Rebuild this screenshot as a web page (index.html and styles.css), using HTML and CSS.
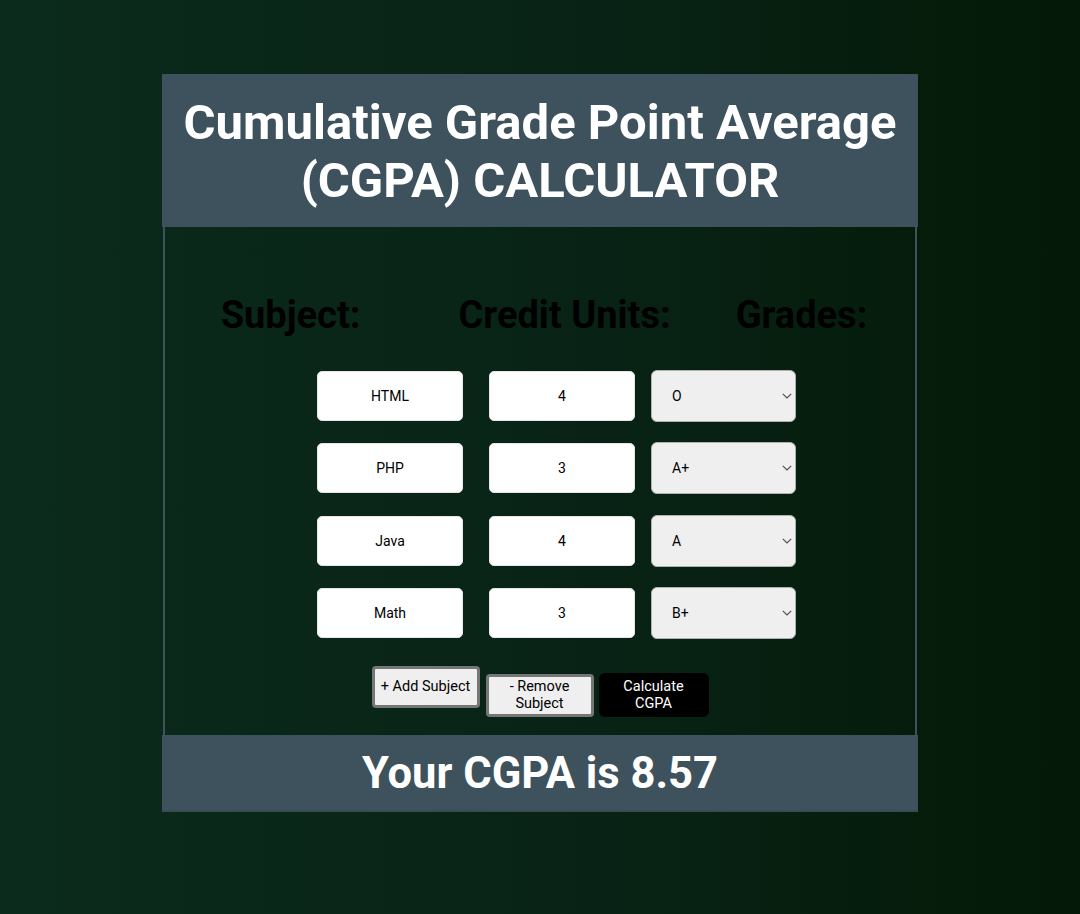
FILE: index.html
```html
<!DOCTYPE html>
<html lang="en">
<head>
<meta charset="utf-8">
<title>CGPA Calculator</title>
<link rel="stylesheet" href="styles.css">
</head>
<body>
<div class="card">
  <header class="card-header">
    <h1>Cumulative Grade Point Average (CGPA) CALCULATOR</h1>
  </header>
  <main class="card-body">
    <div class="labels">
      <h2 class="label label-subject">Subject:</h2>
      <h2 class="label label-credit">Credit Units:</h2>
      <h2 class="label label-grade">Grades:</h2>
    </div>
    <div class="rows">
      <div class="row">
        <input class="field" type="text" value="HTML">
        <input class="field field-credit" type="text" value="4">
        <div class="grade-wrap">
          <select class="grade"><option>O</option><option>A+</option><option>A</option><option>B+</option></select>
          <svg class="chev" width="10" height="6" viewBox="0 0 10 6"><polyline points="0.8,0.8 5,5 9.2,0.8" fill="none" stroke="#4a4a4a" stroke-width="1.1"/></svg>
        </div>
      </div>
      <div class="row">
        <input class="field" type="text" value="PHP">
        <input class="field field-credit" type="text" value="3">
        <div class="grade-wrap">
          <select class="grade"><option>O</option><option selected>A+</option><option>A</option><option>B+</option></select>
          <svg class="chev" width="10" height="6" viewBox="0 0 10 6"><polyline points="0.8,0.8 5,5 9.2,0.8" fill="none" stroke="#4a4a4a" stroke-width="1.1"/></svg>
        </div>
      </div>
      <div class="row">
        <input class="field" type="text" value="Java">
        <input class="field field-credit" type="text" value="4">
        <div class="grade-wrap">
          <select class="grade"><option>O</option><option>A+</option><option selected>A</option><option>B+</option></select>
          <svg class="chev" width="10" height="6" viewBox="0 0 10 6"><polyline points="0.8,0.8 5,5 9.2,0.8" fill="none" stroke="#4a4a4a" stroke-width="1.1"/></svg>
        </div>
      </div>
      <div class="row">
        <input class="field" type="text" value="Math">
        <input class="field field-credit" type="text" value="3">
        <div class="grade-wrap">
          <select class="grade"><option>O</option><option>A+</option><option>A</option><option selected>B+</option></select>
          <svg class="chev" width="10" height="6" viewBox="0 0 10 6"><polyline points="0.8,0.8 5,5 9.2,0.8" fill="none" stroke="#4a4a4a" stroke-width="1.1"/></svg>
        </div>
      </div>
    </div>
    <div class="actions">
      <button class="btn btn-add">+ Add Subject</button>
      <button class="btn btn-remove">- Remove Subject</button>
      <button class="btn btn-calc">Calculate CGPA</button>
    </div>
  </main>
  <footer class="card-footer">
    <h2 class="result">Your CGPA is 8.57</h2>
  </footer>
</div>
</body>
</html>
```
FILE: styles.css
```css
html, body {
  margin: 0;
  padding: 0;
}
body {
  min-height: 914px;
  background: linear-gradient(to right, #0b2b1c 0%, #082315 55%, #041907 100%);
  font-family: Roboto, "Noto Sans", "Liberation Sans", sans-serif;
  padding-top: 74px;
  box-sizing: border-box;
}
.card {
  width: 756px;
  margin: 0 auto 0 162px;
  display: flex;
  flex-direction: column;
}
.card-header {
  background: #3e525d;
  height: 153px;
  box-sizing: border-box;
  padding-top: 3px;
  display: flex;
  align-items: center;
  justify-content: center;
}
.card-header h1 {
  margin: 0;
  color: #ffffff;
  font-size: 49px;
  font-weight: 700;
  line-height: 58px;
  text-align: center;
  padding: 0 4px;
}
.card-body {
  margin: 0 1px;
  border: 2px solid #3e525d;
  border-top: 0;
  border-bottom: 0;
  height: 508px;
  box-sizing: border-box;
  display: flex;
  flex-direction: column;
}
.labels {
  display: flex;
  justify-content: center;
  padding-left: 8px;
  margin-top: 65px;
}
.label {
  margin: 0;
  font-size: 38px;
  font-weight: 700;
  color: #000000;
  line-height: 47px;
}
.label-credit { margin-left: 98px; }
.label-grade { margin-left: 65px; }
.rows {
  display: flex;
  flex-direction: column;
  gap: 20.33px;
  margin-top: 31px;
}
.row {
  display: flex;
  align-items: center;
  justify-content: center;
  padding-left: 33px;
  height: 52px;
}
.field {
  width: 146px;
  height: 50px;
  box-sizing: border-box;
  border: 1px solid #e6e6e6;
  border-radius: 5px;
  background: #ffffff;
  text-align: center;
  font-family: Roboto, "Noto Sans", sans-serif;
  font-size: 14px;
  color: #000000;
  padding: 0;
}
.field-credit { margin-left: 26px; }
.grade-wrap {
  position: relative;
  margin-left: 16px;
  width: 145px;
  height: 52px;
}
.grade {
  -webkit-appearance: none;
  appearance: none;
  width: 145px;
  height: 52px;
  box-sizing: border-box;
  border: 1px solid #b0b0b0;
  border-radius: 6px;
  background-color: #efefef;
  font-family: Roboto, "Noto Sans", sans-serif;
  font-size: 14px;
  color: #000000;
  padding-left: 20px;
}
.chev {
  position: absolute;
  right: 4px;
  top: 23px;
  pointer-events: none;
}
.actions {
  display: flex;
  justify-content: center;
  align-items: baseline;
  gap: 5px;
  margin-top: 27px;
}
.btn {
  font-family: Roboto, "Noto Sans", sans-serif;
  font-size: 14.5px;
  line-height: 17px;
  box-sizing: border-box;
  padding: 0 4px;
  cursor: pointer;
}
.btn-add {
  width: 108px;
  height: 42px;
  background: #efefef;
  color: #000;
  border: 3px solid #767676;
  border-radius: 4px;
}
.btn-remove {
  width: 108px;
  height: 43px;
  background: #efefef;
  color: #000;
  border: 3px solid #767676;
  border-radius: 4px;
  margin-left: 1px;
}
.btn-calc {
  width: 110px;
  height: 44px;
  background: #000000;
  color: #ffffff;
  border: 0;
  border-radius: 6px;
  padding: 0 14px;
}
.card-footer {
  background: #3e525d;
  height: 77px;
  box-sizing: border-box;
  border-bottom: 2px solid #394c56;
  display: flex;
  align-items: center;
  justify-content: center;
}
.result {
  margin: 0;
  color: #ffffff;
  font-size: 43.5px;
  font-weight: 700;
  line-height: 54px;
  padding-top: 3px;
}
```
